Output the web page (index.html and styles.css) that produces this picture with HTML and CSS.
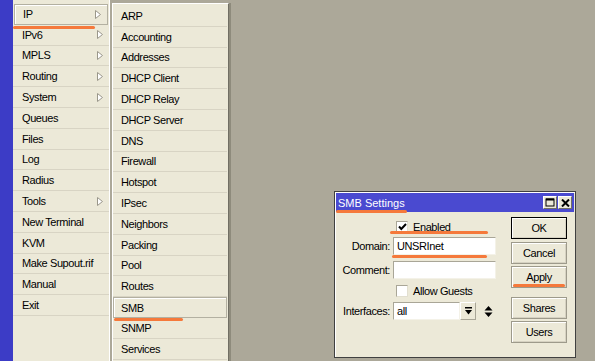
FILE: index.html
```html
<!DOCTYPE html>
<html lang="en">

<head>
    <meta charset="UTF-8">
    <meta name="viewport" content="width=device-width, initial-scale=1.0">
    <title>SMB Settings</title>
    <link rel="stylesheet" href="styles.css">
</head>

<body>
    <div class="desk">
        <div class="sidebar"></div>

        <ul class="menu">
            <li class="item active">IP <svg class="arrow" width="6" height="9" viewBox="0 0 6 9"><path d="M0.5 0.5 L5.5 4.5 L0.5 8.5 Z" fill="#fff" stroke="#9a978a"/></svg></li>
            <li class="item">IPv6 <svg class="arrow" width="6" height="9" viewBox="0 0 6 9"><path d="M0.5 0.5 L5.5 4.5 L0.5 8.5 Z" fill="#fff" stroke="#9a978a"/></svg></li>
            <li class="item">MPLS <svg class="arrow" width="6" height="9" viewBox="0 0 6 9"><path d="M0.5 0.5 L5.5 4.5 L0.5 8.5 Z" fill="#fff" stroke="#9a978a"/></svg></li>
            <li class="item">Routing <svg class="arrow" width="6" height="9" viewBox="0 0 6 9"><path d="M0.5 0.5 L5.5 4.5 L0.5 8.5 Z" fill="#fff" stroke="#9a978a"/></svg></li>
            <li class="item">System <svg class="arrow" width="6" height="9" viewBox="0 0 6 9"><path d="M0.5 0.5 L5.5 4.5 L0.5 8.5 Z" fill="#fff" stroke="#9a978a"/></svg></li>
            <li class="item">Queues</li>
            <li class="item">Files</li>
            <li class="item">Log</li>
            <li class="item">Radius</li>
            <li class="item">Tools <svg class="arrow" width="6" height="9" viewBox="0 0 6 9"><path d="M0.5 0.5 L5.5 4.5 L0.5 8.5 Z" fill="#fff" stroke="#9a978a"/></svg></li>
            <li class="item">New Terminal</li>
            <li class="item">KVM</li>
            <li class="item">Make Supout.rif</li>
            <li class="item">Manual</li>
            <li class="item">Exit</li>
        </ul>

        <ul class="submenu">
            <li class="item">ARP</li>
            <li class="item">Accounting</li>
            <li class="item">Addresses</li>
            <li class="item">DHCP Client</li>
            <li class="item">DHCP Relay</li>
            <li class="item">DHCP Server</li>
            <li class="item">DNS</li>
            <li class="item">Firewall</li>
            <li class="item">Hotspot</li>
            <li class="item">IPsec</li>
            <li class="item">Neighbors</li>
            <li class="item">Packing</li>
            <li class="item">Pool</li>
            <li class="item">Routes</li>
            <li class="item active">SMB</li>
            <li class="item">SNMP</li>
            <li class="item">Services</li>
        </ul>

        <div class="dialog">
            <div class="titlebar">
                <span class="title">SMB Settings</span>
                <span class="tbtn">
                    <svg width="10" height="9" viewBox="0 0 10 9"><rect x="1" y="1" width="8" height="7" fill="none" stroke="#000"/><rect x="1" y="0.5" width="8" height="2" fill="#000"/></svg>
                </span>
                <span class="tbtn">
                    <svg width="9" height="8" viewBox="0 0 9 8"><path d="M1 0.5 L8 7.5 M8 0.5 L1 7.5" stroke="#000" stroke-width="2"/></svg>
                </span>
            </div>

            <div class="dialog-body">
                <div class="form">
                    <div class="row row-enabled">
                        <span class="label"></span>
                        <span class="check">
                            <svg width="9" height="8" viewBox="0 0 9 8"><path d="M1 3.5 L3.3 6 L8 1" fill="none" stroke="#000" stroke-width="2"/></svg>
                        </span>
                        <span class="check-text">Enabled</span>
                    </div>
                    <div class="row row-domain">
                        <span class="label">Domain:</span>
                        <span class="field">UNSRInet</span>
                    </div>
                    <div class="row row-comment">
                        <span class="label">Comment:</span>
                        <span class="field"></span>
                    </div>
                    <div class="row row-guests">
                        <span class="label"></span>
                        <span class="check"></span>
                        <span class="check-text">Allow Guests</span>
                    </div>
                    <div class="row row-ifaces">
                        <span class="label">Interfaces:</span>
                        <span class="field field-short">all</span>
                        <span class="drop">
                            <svg width="7" height="8" viewBox="0 0 7 8"><rect x="0" y="0" width="7" height="1.5" fill="#000"/><path d="M0 3 L7 3 L3.5 7.5 Z" fill="#000"/></svg>
                        </span>
                        <svg class="updown" width="9" height="13" viewBox="0 0 9 13"><path d="M0.5 5.5 L4.5 1 L8.5 5.5 Z M0.5 7.5 L4.5 12 L8.5 7.5 Z" fill="#000"/></svg>
                    </div>
                </div>

                <div class="buttons">
                    <div class="btn btn-default">OK</div>
                    <div class="btn btn-cancel">Cancel</div>
                    <div class="btn btn-apply">Apply</div>
                    <div class="btn btn-shares">Shares</div>
                    <div class="btn">Users</div>
                </div>
            </div>
        </div>

        <!-- orange marks drawn over the screenshot -->
        <span class="mark mark-ip"></span>
        <span class="mark mark-smb"></span>
        <span class="mark mark-title"></span>
        <span class="mark mark-enabled"></span>
        <span class="mark mark-domain"></span>
        <span class="mark mark-apply"></span>
    </div>
</body>

</html>
```

FILE: styles.css
```css
body {
    margin: 0;
    padding: 0;
}

* {
    box-sizing: border-box;
}

ul {
    margin: 0;
    padding: 0;
    list-style: none;
}

.desk {
    position: relative;
    display: flex;
    align-items: flex-start;
    width: 595px;
    height: 361px;
    overflow: hidden;
    background: #ACA899;
    font-family: "Liberation Sans", Arial, sans-serif;
    font-size: 11px;
    letter-spacing: -0.4px;
    color: #000;
}

.sidebar {
    width: 13px;
    height: 361px;
    background: #3C3CC6;
}

/* main menu */
.menu {
    width: 97px;
    height: 361px;
    padding-top: 4px;
    background: #ECE9D8;
    border-right: 1px solid #fff;
}

.item {
    display: flex;
    align-items: center;
    justify-content: space-between;
    height: 20.8px;
    padding: 0 6px 0 9px;
    border-bottom: 1px solid #D8D4C4;
    white-space: nowrap;
}

.item.active {
    border: 1px solid #B3B0A1;
    box-shadow: inset 1px 1px 0 #fff;
    margin: 0 1px;
    padding-left: 8px;
}

.arrow {
    display: block;
}

/* IP submenu */
.submenu {
    width: 117px;
    height: 361px;
    margin-top: 3px;
    margin-left: 2px;
    padding-top: 2px;
    background: #ECE9D8;
    border-top: 1px solid #fff;
    border-left: 1px solid #fff;
    border-right: 1px solid #716F64;
    box-shadow: 2px 0 0 #8E8B7C;
}

.submenu .item {
    padding-left: 8px;
    margin-right: 1px;
}

.submenu .item.active {
    padding-left: 7px;
    margin: 0 1px 0 0;
}

/* settings window */
.dialog {
    position: absolute;
    left: 334px;
    top: 191px;
    width: 242px;
    height: 167px;
    padding: 1px;
    background: #ECE9D8;
    border: 1px solid #404040;
    box-shadow: inset 1px 1px 0 #fff;
}

.titlebar {
    display: flex;
    align-items: center;
    height: 19px;
    padding: 0 2px 0 2px;
    background: #4A4AD0;
}

.title {
    flex: 1;
    color: #fff;
    letter-spacing: 0;
}

.tbtn {
    display: flex;
    align-items: center;
    justify-content: center;
    width: 14px;
    height: 13px;
    margin-left: 1px;
    background: #ECE9D8;
    border: 1px solid;
    border-color: #fff #716F64 #716F64 #fff;
}

.dialog-body {
    display: flex;
}

.form {
    width: 168px;
    padding-top: 7px;
}

.row {
    display: flex;
    align-items: center;
    height: 18px;
}

.row-enabled {
    height: 15px;
}

.row-domain {
    margin-top: 3px;
}

.row-comment {
    margin-top: 6px;
}

.row-guests {
    height: 14px;
    margin-top: 5px;
}

.row-ifaces {
    margin-top: 4px;
}

.label {
    width: 54px;
    margin-right: 3px;
    text-align: right;
}

.field {
    width: 103px;
    height: 18px;
    padding: 1px 0 0 3px;
    background: #fff;
    border: 1px solid;
    border-color: #A9A697 #F4F2E8 #F4F2E8 #A9A697;
    line-height: 15px;
}

.field-short {
    width: 67px;
}

.drop {
    display: flex;
    align-items: center;
    justify-content: center;
    width: 16px;
    height: 18px;
    background: #ECE9D8;
    border: 1px solid;
    border-color: #fff #A9A697 #A9A697 #fff;
}

.updown {
    margin-left: 8px;
}

.check {
    display: flex;
    align-items: center;
    justify-content: center;
    width: 12px;
    height: 12px;
    margin-left: 3px;
    background: #fff;
    border: 1px solid;
    border-color: #A9A697 #E2DFD0 #E2DFD0 #A9A697;
}

.check-text {
    margin-left: 5px;
}

.buttons {
    display: flex;
    flex-direction: column;
    width: 56px;
    margin-left: 7px;
    padding-top: 5px;
}

.btn {
    height: 22px;
    margin-top: 2px;
    line-height: 20px;
    text-align: center;
    background: #ECE9D8;
    border: 1px solid #9D9A8B;
    box-shadow: inset 1px 1px 0 #fff, inset -1px -1px 0 #D6D2C2;
}

.btn-default {
    margin-top: 0;
    border-color: #000;
}

.btn-cancel {
    margin-top: 3px;
}

.btn-shares {
    margin-top: 9px;
}

/* orange annotation strokes */
.mark {
    position: absolute;
    height: 3px;
    border-radius: 2px;
    background: #F5793B;
}

.mark-ip {
    left: 13px;
    top: 26px;
    width: 82px;
}

.mark-smb {
    left: 114px;
    top: 318px;
    width: 69px;
}

.mark-title {
    left: 336px;
    top: 210px;
    width: 71px;
}

.mark-enabled {
    left: 390px;
    top: 231px;
    width: 98px;
}

.mark-domain {
    left: 392px;
    top: 255px;
    width: 95px;
}

.mark-apply {
    left: 513px;
    top: 284px;
    width: 52px;
}
```
